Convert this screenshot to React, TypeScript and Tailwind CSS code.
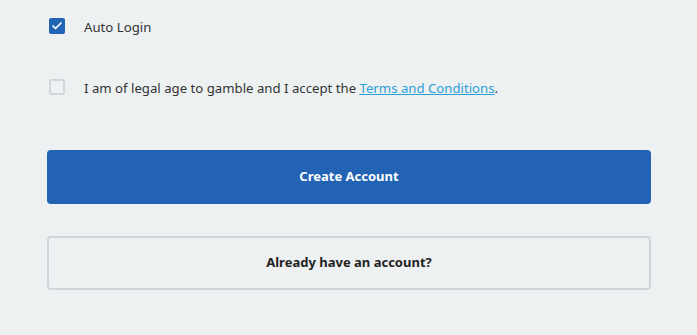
import { Check } from "lucide-react";

function Checkbox({ checked }: { checked: boolean }) {
  if (checked) {
    return (
      <span className="flex h-4 w-4 items-center justify-center rounded-[2px] bg-[#2264b4]">
        <Check className="h-3 w-3 text-white" strokeWidth={3.5} />
      </span>
    );
  }
  return <span className="block h-4 w-4 rounded-[2px] border-2 border-[#d3d6d8] bg-[#eef1f2]" />;
}

export default function App() {
  return (
    <div className="h-[335px] w-[697px] bg-[#eef1f2] font-['Noto_Sans',sans-serif] text-[#333]">
      <div className="flex flex-col px-[47px] pt-[18px]">
        <label className="flex h-4 items-center pl-[2px] text-[13.2px]">
          <Checkbox checked />
          <span className="ml-[19px] pt-[4px]">Auto Login</span>
        </label>
        <label className="mt-[45px] flex h-4 items-center pl-[2px] text-[13.2px]">
          <Checkbox checked={false} />
          <span className="ml-[19px] pt-[4px]">
            I am of legal age to gamble and I accept the{" "}
            <a className="text-[#2ba0d8] underline">Terms and Conditions</a>.
          </span>
        </label>
        <button className="mt-[55px] h-[54px] w-[604px] rounded-[4px] bg-[#2263b3] text-[13px] font-bold text-white">
          Create Account
        </button>
        <button className="mt-[32px] h-[54px] w-[604px] rounded-[4px] border-2 border-[#d1d5d8] text-[13px] font-bold text-[#222]">
          Already have an account?
        </button>
      </div>
    </div>
  );
}
